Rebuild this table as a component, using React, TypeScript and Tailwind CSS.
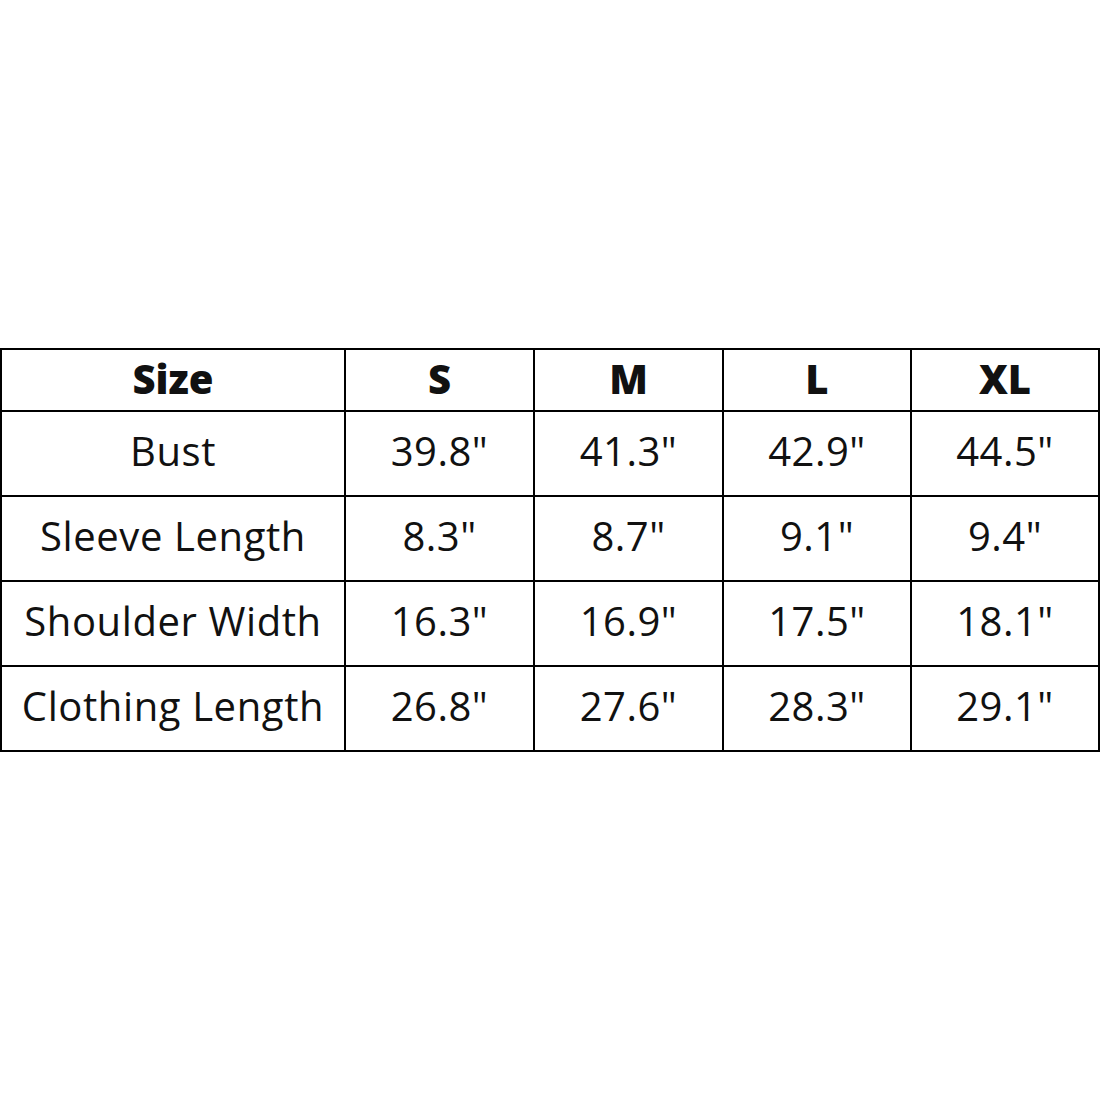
const sizes = ["S", "M", "L", "XL"];

const rows: [string, string[]][] = [
  ["Bust", ['39.8"', '41.3"', '42.9"', '44.5"']],
  ["Sleeve Length", ['8.3"', '8.7"', '9.1"', '9.4"']],
  ["Shoulder Width", ['16.3"', '16.9"', '17.5"', '18.1"']],
  ["Clothing Length", ['26.8"', '27.6"', '28.3"', '29.1"']],
];

export default function App() {
  return (
    <div className="w-[1100px] h-[1100px] bg-white flex items-center font-['Open_Sans',sans-serif] text-[#111]">
      <div className="w-full grid grid-cols-[342px_187px_187px_186px_186px] grid-rows-[60px_83px_83px_83px_83px] gap-[2px] p-[2px] bg-black">
        <div className="bg-white flex items-center justify-center text-[40px] leading-none font-extrabold pb-[3px]">Size</div>
        {sizes.map((s) => (
          <div key={s} className="bg-white flex items-center justify-center text-[40px] leading-none font-extrabold pb-[3px]">
            {s}
          </div>
        ))}
        {rows.map(([label, vals]) => (
          <>
            <div key={label} className="bg-white flex items-center justify-center text-[40px] leading-none tracking-[0.6px] pb-[5px]">
              {label}
            </div>
            {vals.map((v, i) => (
              <div key={label + i} className="bg-white flex items-center justify-center text-[40px] leading-none tracking-[0.5px] pb-[5px]">
                {v}
              </div>
            ))}
          </>
        ))}
      </div>
    </div>
  );
}
